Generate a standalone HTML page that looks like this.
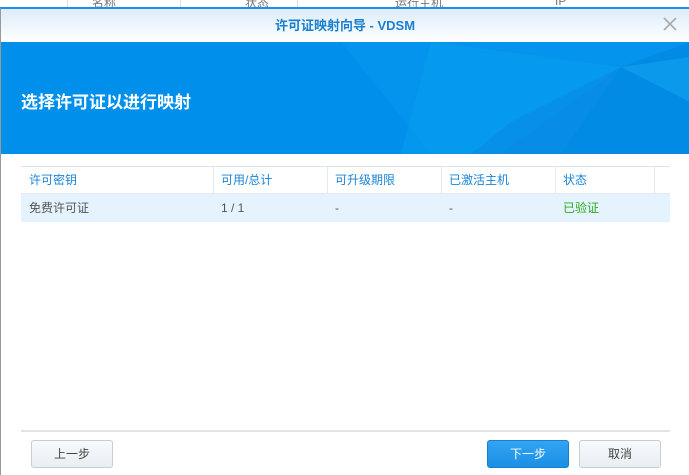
<!DOCTYPE html>
<html><head><meta charset="utf-8"><style>
*{margin:0;padding:0;box-sizing:border-box}
body{width:689px;height:475px;overflow:hidden;background:#fff;font-family:"Liberation Sans","Noto Sans CJK SC",sans-serif;position:relative;font-size:12px}
.bg{position:absolute;top:0;left:0;width:689px;height:8px;background:#fff;overflow:hidden;color:#777}
.bg span{position:absolute;top:-6px;font-size:12px}
.bg i{position:absolute;top:0;width:1px;height:8px;background:#ddd}
.dlg{position:absolute;left:0;top:7px;width:689px;height:468px;border-top:2px solid #1e8fe6;border-left:1px solid #999}
.title{height:33px;background:linear-gradient(#dcecf9,#fff);text-align:center;line-height:33px;color:#1a7fd0;font-weight:bold;font-size:13px;position:relative}
.x{position:absolute;right:12px;top:8px}
.banner{height:112px;background:#0090ec;position:relative;overflow:hidden}
.banner h1{position:absolute;left:20px;top:46px;color:#fff;font-size:17px;font-weight:bold}
.tbl{position:absolute;left:21px;top:166px;width:649px;border-top:1px solid #dbe3ec}
.row{height:27px;position:relative;line-height:27px}
.row span{position:absolute;top:0}
.hd{color:#1a84d6;border-bottom:1px solid #e3eaf2}
.hd i{position:absolute;top:0;width:1px;height:27px;background:#e3eaf2}
.dr{background:#e5f3fe;color:#555;height:28px;line-height:28px}
.foot{position:absolute;left:21px;top:430px;width:649px;border-top:2px solid #e2e5e8}
.btn{position:absolute;top:440px;width:82px;height:28px;border:1px solid #c5ced8;border-radius:3px;background:linear-gradient(#f7f9fb,#e9eef3);text-align:center;line-height:26px;color:#444;font-size:12px}
.pri{background:linear-gradient(#32a4f3,#1a8fe6);border-color:#1780d0;color:#fff}
</style></head><body>
<div class="bg"><i style="left:67px"></i><i style="left:180px"></i><i style="left:297px"></i><i style="left:413px"></i><span style="left:92px">名称</span><span style="left:245px">状态</span><span style="left:395px">运行主机</span><span style="left:555px">IP</span></div>
<div class="dlg">
<div class="title">许可证映射向导 - VDSM<svg class="x" width="14" height="14" viewBox="0 0 14 14"><path d="M1 1L13 13M13 1L1 13" stroke="#aaa" stroke-width="1.6"/></svg></div>
<div class="banner">
<svg width="689" height="112" style="position:absolute;left:0;top:0">
<polygon points="340,0 689,0 689,112 430,112" fill="#0a9af0" opacity=".4"/>
<polygon points="430,0 620,25 500,112 400,112" fill="#0aa6f2" opacity=".35"/>
<polygon points="620,25 689,0 689,112 560,112" fill="#0080dc" opacity=".45"/>
<polygon points="510,80 620,25 560,112 470,112" fill="#0a86e0" opacity=".5"/>
<polygon points="620,25 689,15 689,60" fill="#18b0f5" opacity=".4"/>
</svg>
<h1>选择许可证以进行映射</h1></div>
</div>
<div class="tbl">
<div class="row hd"><span style="left:8px">许可密钥</span><span style="left:200px">可用/总计</span><span style="left:314px">可升级期限</span><span style="left:428px">已激活主机</span><span style="left:542px">状态</span>
<i style="left:192px"></i><i style="left:306px"></i><i style="left:420px"></i><i style="left:534px"></i><i style="left:633px"></i></div>
<div class="row dr"><span style="left:8px">免费许可证</span><span style="left:200px">1 / 1</span><span style="left:314px">-</span><span style="left:428px">-</span><span style="left:542px;color:#2bab1d">已验证</span></div>
</div>
<div class="foot"></div>
<div class="btn" style="left:31px">上一步</div>
<div class="btn pri" style="left:487px">下一步</div>
<div class="btn" style="left:579px">取消</div>
</body></html>
